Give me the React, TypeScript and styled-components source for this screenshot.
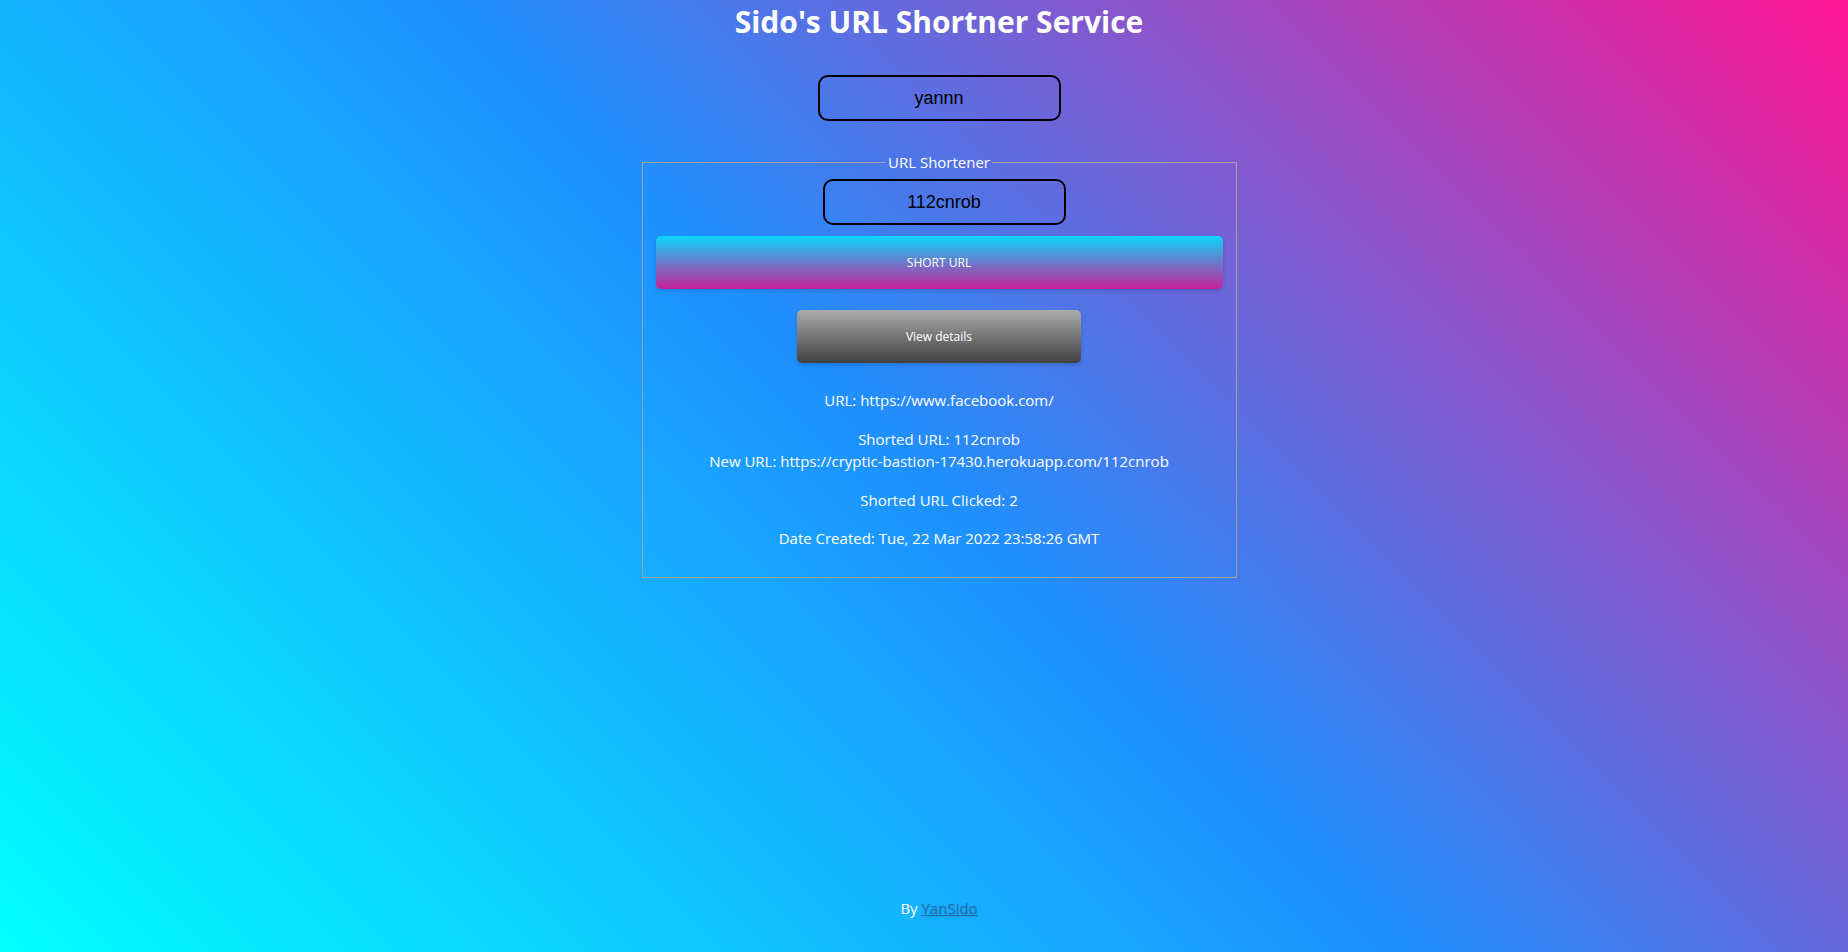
import React from "react";
import styled, { createGlobalStyle } from "styled-components";

const GlobalStyle = createGlobalStyle`
    html, body {
        margin: 0;
        padding: 0;
    }
    body {
        font-family: "Open Sans", "Noto Sans", sans-serif;
        color: white;
    }
`;

type LinkInfo = {
    url: string;
    short: string;
    clicked: number;
    created: string;
};

const info: LinkInfo = {
    url: "https://www.facebook.com/",
    short: "112cnrob",
    clicked: 2,
    created: "Tue, 22 Mar 2022 23:58:26 GMT",
};

const HOST = "https://cryptic-bastion-17430.herokuapp.com/";

function App(): JSX.Element {
    return (
        <>
            <GlobalStyle />
            <Page>
                <Title>Sido's URL Shortner Service</Title>
                <UserInput defaultValue="yannn" />

                <Shortener>
                    <Legend>URL Shortener</Legend>
                    <UserInput defaultValue={info.short} $nudge />
                    <ShortButton>SHORT URL</ShortButton>
                    <DetailsButton>View details</DetailsButton>

                    <Details>
                        <InfoText>URL: {info.url}</InfoText>
                        <InfoText>
                            Shorted URL: {info.short}
                            <br />
                            New URL: {HOST + info.short}
                        </InfoText>
                        <InfoText>Shorted URL Clicked: {info.clicked}</InfoText>
                        <InfoText>Date Created: {info.created}</InfoText>
                    </Details>
                </Shortener>

                <Footer>
                    By <AuthorLink href="#">YanSido</AuthorLink>
                </Footer>
            </Page>
        </>
    );
}

const Page = styled.div`
    box-sizing: border-box;
    min-height: 100vh;
    padding-left: 30px;
    display: flex;
    flex-direction: column;
    align-items: center;
    background: linear-gradient(45deg, cyan, dodgerblue, deeppink);
`;

const Title = styled.h1`
    margin: 0;
    font-size: 30px;
    line-height: 43px;
    font-weight: 700;
    color: white;
`;

const UserInput = styled.input<{ $nudge?: boolean }>`
    box-sizing: border-box;
    width: 243px;
    height: 46px;
    margin: 32px 0 0 ${(p) => (p.$nudge ? "10px" : "0")};
    border: 2px solid black;
    border-radius: 10px;
    background: transparent;
    text-align: center;
    font-family: "Liberation Sans", Arial, sans-serif;
    font-size: 18px;
    color: black;
    outline: none;

    fieldset & {
        margin-top: 0;
    }
`;

const Shortener = styled.fieldset`
    box-sizing: border-box;
    width: 595px;
    margin: 31px 0 0;
    padding: 6px 13px 11px;
    border: 1px solid #a2a2a2;
    display: flex;
    flex-direction: column;
    align-items: center;
    text-align: center;
`;

const Legend = styled.legend`
    padding: 0 2px;
    margin: 0 auto;
    font-size: 15px;
    line-height: 21px;
`;

const ShortButton = styled.button`
    box-sizing: border-box;
    width: 100%;
    height: 53px;
    margin: 11px 0 10px;
    border: none;
    border-radius: 5px;
    background: linear-gradient(#0bd6fa, #c81f98);
    box-shadow: 0 2px 4px rgba(0, 0, 0, 0.15);
    color: white;
    font-family: inherit;
    font-size: 12px;
    cursor: pointer;
`;

const DetailsButton = styled(ShortButton)`
    width: 284px;
    background: linear-gradient(#ababab, #414141);
`;

const Details = styled.div`
    width: 100%;
`;

const InfoText = styled.p`
    margin: 16px 0;
    font-size: 15px;
    line-height: 22.5px;
`;

const Footer = styled.p`
    margin: auto 0 0;
    padding-bottom: 33px;
    font-size: 15px;
    line-height: 22px;
`;

const AuthorLink = styled.a`
    color: #2a6ea8;
    text-shadow: 0 1px 2px rgba(0, 0, 0, 0.2);
`;

export default App;
